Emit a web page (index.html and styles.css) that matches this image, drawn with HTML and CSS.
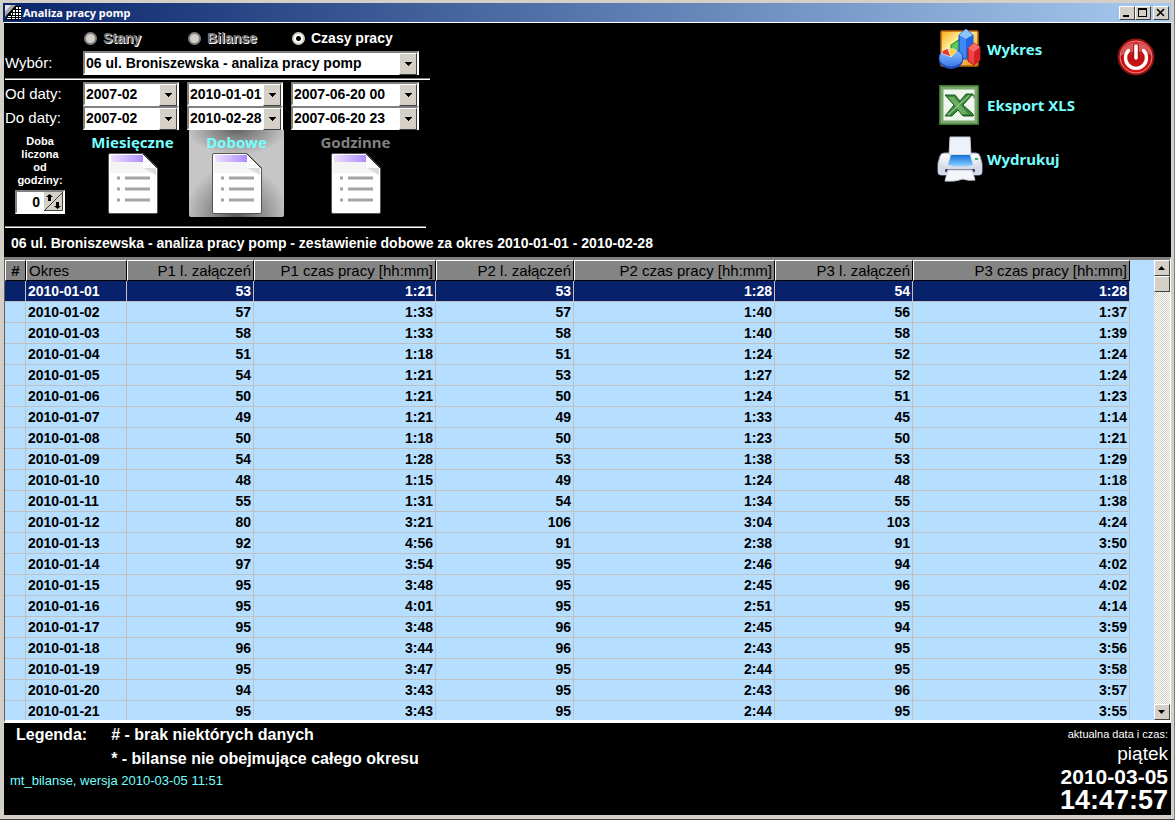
FILE: index.html
```html
<!DOCTYPE html>
<html lang="pl">
<head>
<meta charset="utf-8">
<title>Analiza pracy pomp</title>
<link rel="stylesheet" href="styles.css">
</head>
<body>
<div class="window">
  <header class="titlebar">
    <svg class="app-icon" width="16" height="16" viewBox="0 0 16 16" aria-hidden="true">
      <path d="M0 0h11L0 12z" fill="#a8a8a8"/><path d="M0 0h6L0 7z" fill="#e4e4e4"/>
      <path d="M10 1h6v14H1v-4z" fill="#000"/>
      <path d="M11 2h2v2h-2zM14 2h2v2h-2zM8 5h2v2H8zM11 5h2v2h-2zM14 5h2v2h-2zM6 8h1v2H6zM8 8h2v2H8zM11 8h2v2h-2zM14 8h2v2h-2zM3 11h3v1H3zM7 11h3v1H7zM11 11h2v1h-2zM14 11h2v1h-2zM2 13h4v1H2zM7 13h3v1H7zM11 13h2v1h-2zM14 13h2v1h-2z" fill="#fff"/>
    </svg>
    <h1 class="window-title">Analiza pracy pomp</h1>
    <div class="window-buttons">
      <button class="win-btn" aria-label="Minimalizuj"><svg width="12" height="10" viewBox="0 0 12 10"><path d="M2 7h6v2H2z"/></svg></button>
      <button class="win-btn" aria-label="Maksymalizuj"><svg width="12" height="10" viewBox="0 0 12 10"><path fill-rule="evenodd" d="M1 0h9v9H1zM2 2v6h7V2z"/></svg></button>
      <button class="win-btn win-close" aria-label="Zamknij"><svg width="12" height="10" viewBox="0 0 12 10"><path d="M2 1l7 7M9 1L2 8" stroke="#000" stroke-width="1.600"/></svg></button>
    </div>
  </header>

  <section class="top-panel">
    <form class="filters">
      <div class="radios">
        <label class="radio is-off"><input type="radio" name="mode" disabled>Stany</label>
        <label class="radio is-off"><input type="radio" name="mode" disabled>Bilanse</label>
        <label class="radio"><input type="radio" name="mode" checked>Czasy pracy</label>
      </div>
      <div class="field-row">
        <label class="field-label" for="object">Wybór:</label>
        <span class="combo combo-wide"><select id="object"><option>06 ul. Broniszewska - analiza pracy pomp</option></select></span>
      </div>
      <hr class="rule">
      <div class="field-row">
        <label class="field-label" for="from-month">Od daty:</label>
        <span class="combo"><select id="from-month"><option>2007-02</option></select></span>
        <span class="combo"><select aria-label="Od dnia"><option>2010-01-01</option></select></span>
        <span class="combo"><select aria-label="Od godziny"><option>2007-06-20 00</option></select></span>
      </div>
      <div class="field-row">
        <label class="field-label" for="to-month">Do daty:</label>
        <span class="combo"><select id="to-month"><option>2007-02</option></select></span>
        <span class="combo"><select aria-label="Do dnia"><option>2010-02-28</option></select></span>
        <span class="combo"><select aria-label="Do godziny"><option>2007-06-20 23</option></select></span>
      </div>
      <div class="field-row reports">
        <div class="day-start">
          <label for="hour">Doba<br>liczona<br>od<br>godziny:</label>
          <span class="spinner">
            <input id="hour" type="number" value="0">
            <svg width="19" height="19" viewBox="0 0 19 19" aria-hidden="true">
              <path d="M0 0h19v19H0z" fill="#d4d0c8"/><path d="M0 18.500h18.500V0" stroke="#404040" fill="none"/>
              <path d="M1 18L18 1" stroke="#404040"/>
              <path d="M5.500 2L9 5H7v4H4V5H2zM13.500 17L10 14h2v-4h3v4h2z" fill="#000"/>
            </svg>
          </span>
        </div>
        <button type="button" class="report">Miesięczne
          <svg width="50" height="61" viewBox="0 0 50 61"><use href="#page"/></svg>
        </button>
        <button type="button" class="report is-active">Dobowe
          <svg width="50" height="61" viewBox="0 0 50 61"><use href="#page"/></svg>
        </button>
        <button type="button" class="report is-disabled" disabled>Godzinne
          <svg width="50" height="61" viewBox="0 0 50 61"><use href="#page"/></svg>
        </button>
      </div>
      <hr class="rule rule-low">
    </form>

    <nav class="actions">
      <button class="action">
        <svg width="46" height="44" viewBox="0 0 46 44" aria-hidden="true">
          <defs>
            <linearGradient id="gold" x1="0" y1="0" x2="1" y2="1"><stop offset="0" stop-color="#f9a812"/><stop offset=".35" stop-color="#fff3a0"/><stop offset="1" stop-color="#f08a10"/></linearGradient>
            <linearGradient id="pie" x1="0" y1="0" x2="0" y2="1"><stop offset="0" stop-color="#8fc0ff"/><stop offset="1" stop-color="#3a7ae8"/></linearGradient>
          </defs>
          <rect x="4" y="4" width="37" height="35" rx="1" fill="url(#gold)" stroke="#b86408" stroke-width="1.500"/>
          <path d="M14 18l9-6v13h-9z" fill="#5cc858" stroke="#188028"/>
          <path d="M22 8l7-6 7 6v24H22z" fill="#3c88f4" stroke="#1548b8"/>
          <path d="M22 8l7-6 7 6-7 4z" fill="#8cc4ff"/><path d="M29 12l7-4v24h-7z" fill="#1f68e0"/>
          <path d="M31 21l6-5 6 4v13l-6 5-6-4z" fill="#f04444" stroke="#a81018"/>
          <path d="M31 21l6-5 6 4-6 5z" fill="#f86c68"/><path d="M37 25l6-5v13l-6 5z" fill="#d42028"/>
          <ellipse cx="14" cy="33" rx="12" ry="9" fill="#2250b8"/>
          <ellipse cx="14" cy="31" rx="12" ry="9" fill="url(#pie)" stroke="#1e4cb8"/>
          <path d="M14 30L4 26q3-4 7-4.500z" fill="#e83a28" stroke="#fff" stroke-width=".6"/>
          <path d="M14 30l-3-8.500q6-.5 9 2z" fill="#ffd030" stroke="#fff" stroke-width=".6"/>
        </svg>
        Wykres
      </button>
      <button class="action">
        <svg width="46" height="44" viewBox="0 0 46 44" aria-hidden="true">
          <rect x="3" y="3" width="38" height="38" fill="#eef5ec" stroke="#38752f" stroke-width="2"/>
          <rect x="5" y="5" width="34" height="34" fill="none" stroke="#7aa870" stroke-width="3"/>
          <path d="M8 12h10l5 6 6-7h7L26 22l10 9v2H26l-5-6-6 6H8l9-11z" fill="#38853a" stroke="#205d25"/>
          <path d="M11 14h6l14 17h-6z" fill="#6aac62"/>
          <path d="M32 12.500L11 32" stroke="#8cc484" stroke-width="1.500"/>
          <path d="M27 32.500h10M34 12h3v3" stroke="#1c5c20" fill="none"/>
        </svg>
        Eksport XLS
      </button>
      <button class="action action-print">
        <svg width="46" height="48" viewBox="0 0 46 48" aria-hidden="true">
          <defs><linearGradient id="blue" x1="0" y1="0" x2="0" y2="1"><stop offset="0" stop-color="#1470d8"/><stop offset="1" stop-color="#8cd4ff"/></linearGradient>
          <linearGradient id="body" x1="0" y1="0" x2="0" y2="1"><stop offset="0" stop-color="#fff"/><stop offset="1" stop-color="#c4c8dc"/></linearGradient></defs>
          <path d="M7 18h32q3 0 4 3l2 7v9q0 3-3 3H4q-3 0-3-3v-9l2-7q1-3 4-3z" fill="url(#body)" stroke="#8d93ae"/>
          <path d="M13 2h20l1 18H12z" fill="#edf1f8" stroke="#c3c9d8"/>
          <path d="M14 20h19l3 10q-13 3-25 0z" fill="url(#blue)"/>
          <path d="M1 28q5 5 10 5h24q6 0 10-5v9q0 3-3 3H4q-3 0-3-3z" fill="#d6d9e7"/>
          <path d="M8 34h30v3H8z" fill="#4a4e62"/>
          <path d="M11 35h24l3 10q-7 1-12-1-8 3-18 2z" fill="#f4f6fb" stroke="#c5cad8"/>
          <path d="M38 24h3" stroke="#38b060" stroke-width="2"/>
        </svg>
        Wydrukuj
      </button>
    </nav>
    <button class="power" aria-label="Zakończ">
      <svg width="38" height="38" viewBox="0 0 38 38" aria-hidden="true">
        <defs><linearGradient id="red" x1="0" y1="0" x2="0" y2="1"><stop offset="0" stop-color="#dd3030"/><stop offset=".5" stop-color="#c01010"/><stop offset="1" stop-color="#d81818"/></linearGradient></defs>
        <circle cx="19" cy="19" r="17.500" fill="url(#red)" stroke="#8a1414" stroke-width="2"/>
        <circle cx="19" cy="19" r="16" fill="none" stroke="#ee8080"/>
        <path d="M4 18C5 1 33 1 34 17 25 12 14 12 4 18z" fill="#fff" opacity=".25"/>
        <path d="M11.500 12.500a10.500 10.500 0 1 0 15 0" fill="none" stroke="#fff" stroke-width="3.400" stroke-linecap="round"/>
        <path d="M19 8v12" stroke="#a01010" stroke-width="5.500" stroke-linecap="round"/>
        <path d="M19 8v12" stroke="#fff" stroke-width="3.600" stroke-linecap="round"/>
      </svg>
    </button>
    <h2 class="summary">06 ul. Broniszewska - analiza pracy pomp - zestawienie dobowe za okres 2010-01-01 - 2010-02-28</h2>
  </section>

  <main class="grid-view">
    <div class="table-area">
      <table class="data">
        <colgroup><col class="c-flag"><col class="c-date"><col class="c-p1n"><col class="c-p1t"><col class="c-p2n"><col class="c-p2t"><col class="c-p3n"><col></colgroup>
        <thead><tr><th>#</th><th>Okres</th><th>P1 l. załączeń</th><th>P1 czas pracy [hh:mm]</th><th>P2 l. załączeń</th><th>P2 czas pracy [hh:mm]</th><th>P3 l. załączeń</th><th>P3 czas pracy [hh:mm]</th></tr></thead>
        <tbody>
          <tr class="is-selected"><td></td><td>2010-01-01</td><td>53</td><td>1:21</td><td>53</td><td>1:28</td><td>54</td><td>1:28</td></tr>
          <tr><td></td><td>2010-01-02</td><td>57</td><td>1:33</td><td>57</td><td>1:40</td><td>56</td><td>1:37</td></tr>
          <tr><td></td><td>2010-01-03</td><td>58</td><td>1:33</td><td>58</td><td>1:40</td><td>58</td><td>1:39</td></tr>
          <tr><td></td><td>2010-01-04</td><td>51</td><td>1:18</td><td>51</td><td>1:24</td><td>52</td><td>1:24</td></tr>
          <tr><td></td><td>2010-01-05</td><td>54</td><td>1:21</td><td>53</td><td>1:27</td><td>52</td><td>1:24</td></tr>
          <tr><td></td><td>2010-01-06</td><td>50</td><td>1:21</td><td>50</td><td>1:24</td><td>51</td><td>1:23</td></tr>
          <tr><td></td><td>2010-01-07</td><td>49</td><td>1:21</td><td>49</td><td>1:33</td><td>45</td><td>1:14</td></tr>
          <tr><td></td><td>2010-01-08</td><td>50</td><td>1:18</td><td>50</td><td>1:23</td><td>50</td><td>1:21</td></tr>
          <tr><td></td><td>2010-01-09</td><td>54</td><td>1:28</td><td>53</td><td>1:38</td><td>53</td><td>1:29</td></tr>
          <tr><td></td><td>2010-01-10</td><td>48</td><td>1:15</td><td>49</td><td>1:24</td><td>48</td><td>1:18</td></tr>
          <tr><td></td><td>2010-01-11</td><td>55</td><td>1:31</td><td>54</td><td>1:34</td><td>55</td><td>1:38</td></tr>
          <tr><td></td><td>2010-01-12</td><td>80</td><td>3:21</td><td>106</td><td>3:04</td><td>103</td><td>4:24</td></tr>
          <tr><td></td><td>2010-01-13</td><td>92</td><td>4:56</td><td>91</td><td>2:38</td><td>91</td><td>3:50</td></tr>
          <tr><td></td><td>2010-01-14</td><td>97</td><td>3:54</td><td>95</td><td>2:46</td><td>94</td><td>4:02</td></tr>
          <tr><td></td><td>2010-01-15</td><td>95</td><td>3:48</td><td>95</td><td>2:45</td><td>96</td><td>4:02</td></tr>
          <tr><td></td><td>2010-01-16</td><td>95</td><td>4:01</td><td>95</td><td>2:51</td><td>95</td><td>4:14</td></tr>
          <tr><td></td><td>2010-01-17</td><td>95</td><td>3:48</td><td>96</td><td>2:45</td><td>94</td><td>3:59</td></tr>
          <tr><td></td><td>2010-01-18</td><td>96</td><td>3:44</td><td>96</td><td>2:43</td><td>95</td><td>3:56</td></tr>
          <tr><td></td><td>2010-01-19</td><td>95</td><td>3:47</td><td>95</td><td>2:44</td><td>95</td><td>3:58</td></tr>
          <tr><td></td><td>2010-01-20</td><td>94</td><td>3:43</td><td>95</td><td>2:43</td><td>96</td><td>3:57</td></tr>
          <tr><td></td><td>2010-01-21</td><td>95</td><td>3:43</td><td>95</td><td>2:44</td><td>95</td><td>3:55</td></tr>
        </tbody>
      </table>
    </div>
    <div class="scrollbar">
      <button class="scroll-btn" aria-label="W górę"><svg width="8" height="4" viewBox="0 0 8 4"><path d="M0 4h7L3.500 0z"/></svg></button>
      <div class="scroll-thumb"></div>
      <button class="scroll-btn scroll-down" aria-label="W dół"><svg width="8" height="4" viewBox="0 0 8 4"><path d="M0 0h7L3.500 4z"/></svg></button>
    </div>
  </main>

  <footer class="bottom-panel">
    <div>
      <div class="legend">
        <span>Legenda:</span>
        <div># - brak niektórych danych<br>* - bilanse nie obejmujące całego okresu</div>
      </div>
      <p class="version">mt_bilanse, wersja 2010-03-05 11:51</p>
    </div>
    <div class="clock">
      <span class="clock-label">aktualna data i czas:</span>
      <span class="clock-day">piątek</span>
      <time class="clock-date">2010-03-05</time>
      <time class="clock-time">14:47:57</time>
    </div>
  </footer>
</div>

<svg class="symbols" width="0" height="0" aria-hidden="true">
  <defs>
    <linearGradient id="violet"><stop offset="0" stop-color="#eee0ff"/><stop offset="1" stop-color="#ae8cff"/></linearGradient>
    <symbol id="page" viewBox="0 0 50 61">
      <path d="M2 .5h33L49.500 15v44q0 1.500-1.500 1.500H2Q.5 60.500.5 59V2Q.5.500 2 .5z" fill="#fff" stroke="#555"/>
      <path d="M2 9h33v6h13v5H2z" fill="#f4f4f4"/>
      <path d="M3 2h32v7H3z" fill="url(#violet)"/>
      <path d="M36 15h12v7z" fill="#dcdcdc"/>
      <path d="M35 1v14h14z" fill="#fff"/><path d="M35 1l14 14" stroke="#333"/>
      <path d="M9 25h3M9 36h3M9 47h3M17 25h25M17 36h25M17 47h25" stroke="#a4a4a4" stroke-width="3"/>
    </symbol>
  </defs>
</svg>
</body>
</html>
```
FILE: styles.css
```css
* { box-sizing: border-box; }

body {
  margin: 0;
  background: #d4d0c8;
  font: bold 14px/20px "Liberation Sans", Arial, sans-serif;
  color: #000;
}

button { font: inherit; padding: 0; border: 0; background: none; }

.window {
  display: flex;
  flex-direction: column;
  height: 100vh;
  padding: 3px 3px 4px;
  border-bottom: 1px solid #404040;
  border-right: 1px solid #808080;
}

/* title bar */
.titlebar {
  display: flex;
  align-items: center;
  height: 19px;
  flex: none;
  padding: 0 2px;
  background: linear-gradient(90deg, #0a246a, #a6caf0);
}
.window-title {
  flex: 1;
  margin: 0 0 0 2px;
  color: #fff;
  font: bold 11px/18px "Noto Sans", sans-serif;
}
.window-buttons { display: flex; }
.win-btn {
  display: grid;
  place-items: center;
  width: 16px;
  height: 14px;
  background: #d4d0c8;
  border: 1px solid;
  border-color: #fff #404040 #404040 #fff;
}
.win-close { margin-left: 2px; }

/* upper panel */
.top-panel {
  display: grid;
  grid-template-columns: auto 1fr auto auto;
  flex: none;
  margin-left: 1px;
  border-top: 1px solid #fff;
  background: #000;
  color: #fff;
}
.filters { padding-left: 1px; width: 426px; }
.radios { display: flex; height: 28px; padding: 5px 0 0 79px; }
.radio { display: flex; align-items: center; gap: 6px; width: 104px; height: 20px; white-space: nowrap; }
.radio input {
  appearance: none;
  width: 13px;
  height: 13px;
  margin: 0;
  border: 2px solid #808080;
  border-radius: 50%;
  background: #d4d0c8;
}
.radio input:checked { background: radial-gradient(circle, #000 2px, #fff 3px); border-color: #d4d0c8; }
.radio.is-off { color: #707070; text-shadow: 1px 1px 0 #fff; }

.field-row { display: grid; grid-template-columns: 78px 104px 104px 128px; align-items: center; }
.field-label { font-weight: normal; font-size: 15px; }
.combo { position: relative; display: block; height: 24px; margin-right: 8px; }
.combo:last-child { margin-right: 0; }
.combo-wide { grid-column: 2 / 5; }
.combo select {
  appearance: none;
  width: 100%;
  height: 24px;
  padding: 0 1px;
  border: 2px solid;
  border-color: #808080 #fff #fff #808080;
  border-radius: 0;
  background: #fff;
  color: #000;
  font: inherit;
  line-height: 18px;
}
.combo::after {
  content: "";
  position: absolute;
  top: 2px;
  right: 2px;
  width: 16px;
  height: 20px;
  border: 1px solid;
  border-color: #fff #404040 #404040 #fff;
  background:
    linear-gradient(#000, #000) center 8px / 7px 1px no-repeat,
    linear-gradient(#000, #000) center 9px / 5px 1px no-repeat,
    linear-gradient(#000, #000) center 10px / 3px 1px no-repeat,
    linear-gradient(#000, #000) center 11px / 1px 1px no-repeat,
    #d4d0c8;
  pointer-events: none;
}
.rule { width: 425px; height: 2px; margin: 3px 0 2px; border: 0; background: #fff; border-top: 1px solid #808080; }
.rule-low { width: 421px; margin: 9px 0 4px; }

.reports { align-items: start; margin-top: -1px; }
.day-start { width: 70px; text-align: center; font-size: 11px; line-height: 13px; padding-top: 6px; }
.spinner {
  display: flex;
  width: 50px;
  height: 24px;
  margin: 3px 0 0 10px;
  border: 2px solid;
  border-color: #808080 #fff #fff #808080;
  background: #fff;
}
.spinner input {
  appearance: textfield;
  width: 27px;
  padding: 0 4px;
  border: 0;
  font: inherit;
  font-size: 14px;
  text-align: right;
}
.spinner input::-webkit-inner-spin-button { display: none; }
.report {
  display: flex;
  flex-direction: column;
  align-items: center;
  width: 95px;
  height: 88px;
  padding-top: 3px;
  margin-left: 2px;
  color: #7ff;
  font: bold 15px/21px "Noto Sans", sans-serif;
}
.report.is-active {
  border-radius: 2px;
  background:
    radial-gradient(ellipse 50px 26px at 50% 0, #606060, transparent),
    radial-gradient(circle 52px at 50% 100%, #585858, #999 60%, transparent),
    #c6c6c6;
}
.report.is-disabled { margin-left: 17px; color: #808080; }

.actions { grid-column: 3; display: flex; flex-direction: column; gap: 12px; padding-top: 4px; width: 180px; }
.action {
  display: flex;
  align-items: center;
  gap: 4px;
  color: #7ff;
  font: bold 15px/21px "Noto Sans", sans-serif;
}
.action-print { margin-top: -4px; }
.power { align-self: start; margin: 15px 16px 0 0; }
.power svg { display: block; }
.summary { grid-column: 1 / -1; margin: 0; padding: 1px 7px 4px; font-size: 14px; line-height: 20px; }

/* data grid */
.grid-view {
  display: flex;
  flex: 1;
  min-height: 0;
  margin-left: 1px;
  border: solid;
  border-width: 3px 1px 3px 1px;
  border-color: #808080 #fff #fff #606060;
  background: #b5deff;
}
.table-area { flex: 1; overflow: hidden; padding-right: 24px; }
.data { width: 100%; table-layout: fixed; border-collapse: separate; border-spacing: 0; }
.c-flag { width: 21px; }
.c-date { width: 101px; }
.c-p1n { width: 127px; }
.c-p1t { width: 182px; }
.c-p2n { width: 138px; }
.c-p2t { width: 201px; }
.c-p3n { width: 138px; }
.data th, .data td { height: 21px; padding: 0 2px; line-height: 19px; text-align: right; white-space: nowrap; overflow: hidden; }
.data th {
  background: #848484;
  border: 1px solid;
  border-color: #fff #000 #000 #fff;
  font-size: 15px;
  font-weight: normal;
}
.data td { border: solid #c0c0c0; border-width: 0 1px 1px 0; }
.data th:first-child { text-align: center; font-weight: bold; }
.data th:nth-child(2), .data td:nth-child(2) { text-align: left; }
.data .is-selected td { background: #08216b; color: #fff; }

.scrollbar {
  display: flex;
  flex-direction: column;
  width: 16px;
  background: repeating-conic-gradient(#fff 0 25%, #d4d0c8 0 50%) 0 0 / 2px 2px;
}
.scroll-btn, .scroll-thumb {
  display: grid;
  place-items: center;
  height: 16px;
  background: #d4d0c8;
  border: 1px solid;
  border-color: #fff #404040 #404040 #fff;
}
.scroll-down { margin-top: auto; }

/* lower panel */
.bottom-panel {
  display: flex;
  justify-content: space-between;
  flex: none;
  height: 92px;
  margin-left: 1px;
  padding: 0 3px 0 6px;
  background: #000;
  color: #fff;
}
.legend { display: flex; gap: 24px; padding-left: 6px; font-size: 16px; line-height: 24px; }
.version { margin: 0; color: #7ff; font-weight: normal; font-size: 13px; line-height: 20px; }
.clock { display: flex; flex-direction: column; align-items: flex-end; padding-top: 4px; }
.clock-label { font-weight: normal; font-size: 11px; line-height: 14px; }
.clock-day { font-weight: normal; font-size: 19px; line-height: 25px; }
.clock-date { font-size: 21px; line-height: 22px; }
.clock-time { font-size: 27px; line-height: 24px; }

.symbols { position: absolute; }
```
